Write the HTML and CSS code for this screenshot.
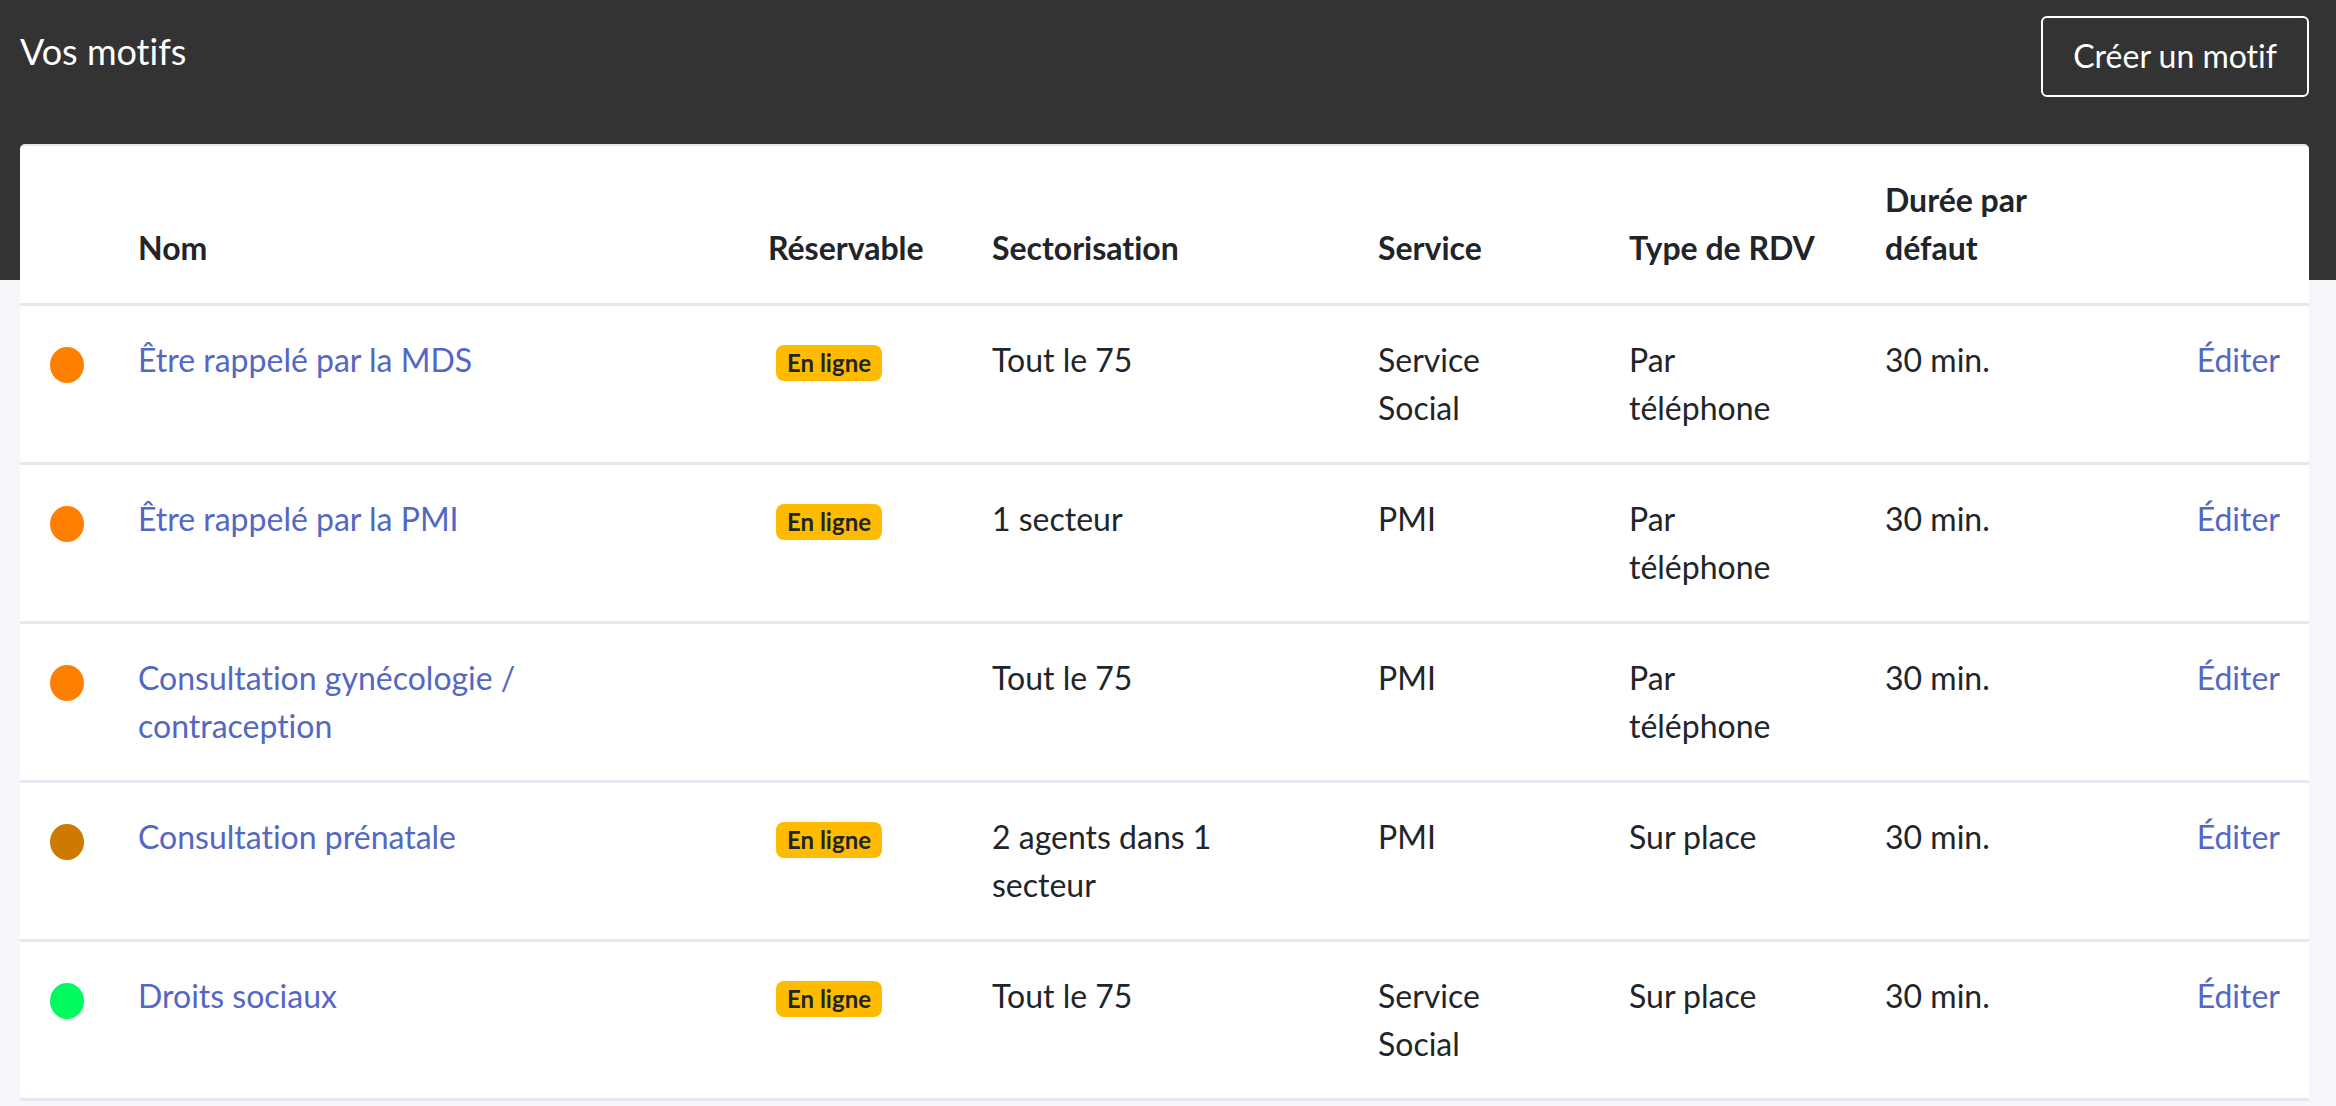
FILE: index.html
```html
<!DOCTYPE html>
<html lang="fr">
<head>
<meta charset="utf-8">
<title>Vos motifs</title>
<link rel="stylesheet" href="styles.css">
</head>
<body>
<div class="page">
  <header class="topbar">
    <h1 class="title">Vos motifs</h1>
    <a class="btn-outline" href="#">Créer un motif</a>
  </header>
  <section class="card">
    <table class="motifs">
      <colgroup>
        <col class="c-dot"><col class="c-nom"><col class="c-res"><col class="c-sect"><col class="c-serv"><col class="c-type"><col class="c-dur"><col class="c-edit">
      </colgroup>
      <thead>
        <tr>
          <th class="dot-cell"></th>
          <th class="nom">Nom</th>
          <th class="res nowrap">Réservable</th>
          <th class="sect nowrap">Sectorisation</th>
          <th class="serv">Service</th>
          <th class="type nowrap">Type de RDV</th>
          <th class="dur">Durée par défaut</th>
          <th class="edit"></th>
        </tr>
      </thead>
      <tbody>
        <tr>
          <td class="dot-cell"><span class="dot dot-orange"></span></td>
          <td class="nom"><a href="#">Être rappelé par la MDS</a></td>
          <td class="res"><span class="badge">En ligne</span></td>
          <td class="sect">Tout le 75</td>
          <td class="serv">Service Social</td>
          <td class="type">Par téléphone</td>
          <td class="dur">30 min.</td>
          <td class="edit"><a href="#">Éditer</a></td>
        </tr>
        <tr>
          <td class="dot-cell"><span class="dot dot-orange"></span></td>
          <td class="nom"><a href="#">Être rappelé par la PMI</a></td>
          <td class="res"><span class="badge">En ligne</span></td>
          <td class="sect">1 secteur</td>
          <td class="serv">PMI</td>
          <td class="type">Par téléphone</td>
          <td class="dur">30 min.</td>
          <td class="edit"><a href="#">Éditer</a></td>
        </tr>
        <tr>
          <td class="dot-cell"><span class="dot dot-orange"></span></td>
          <td class="nom"><a href="#">Consultation gynécologie / contraception</a></td>
          <td class="res"></td>
          <td class="sect">Tout le 75</td>
          <td class="serv">PMI</td>
          <td class="type">Par téléphone</td>
          <td class="dur">30 min.</td>
          <td class="edit"><a href="#">Éditer</a></td>
        </tr>
        <tr>
          <td class="dot-cell"><span class="dot dot-brown"></span></td>
          <td class="nom"><a href="#">Consultation prénatale</a></td>
          <td class="res"><span class="badge">En ligne</span></td>
          <td class="sect">2 agents dans 1 secteur</td>
          <td class="serv">PMI</td>
          <td class="type">Sur place</td>
          <td class="dur">30 min.</td>
          <td class="edit"><a href="#">Éditer</a></td>
        </tr>
        <tr>
          <td class="dot-cell"><span class="dot dot-green"></span></td>
          <td class="nom"><a href="#">Droits sociaux</a></td>
          <td class="res"><span class="badge">En ligne</span></td>
          <td class="sect">Tout le 75</td>
          <td class="serv">Service Social</td>
          <td class="type">Sur place</td>
          <td class="dur">30 min.</td>
          <td class="edit"><a href="#">Éditer</a></td>
        </tr>
      </tbody>
    </table>
  </section>
</div>
</body>
</html>
```

FILE: styles.css
```css
html, body {
  margin: 0;
  padding: 0;
}

body {
  font-family: Lato, "Open Sans", "Liberation Sans", sans-serif;
  font-size: 32px;
  line-height: 48px;
  color: #212529;
  background: #f5f6fa;
  font-variant-ligatures: no-common-ligatures;
  font-feature-settings: "liga" 0, "dlig" 0;
}

.page {
  min-height: 1106px;
  padding: 0 27px 0 20px;
  background: linear-gradient(to bottom, #333333 0, #333333 280px, #f5f6fa 280px);
}

.topbar {
  display: flex;
  justify-content: space-between;
  align-items: flex-start;
  padding-top: 16px;
}

.title {
  margin: 11px 0 0 0;
  font-size: 36px;
  line-height: 48px;
  font-weight: 400;
  color: #ffffff;
}

.btn-outline {
  display: inline-block;
  padding: 14px 30px 15px 30px;
  border: 2px solid #ffffff;
  border-radius: 6px;
  color: #ffffff;
  text-decoration: none;
  font-size: 32px;
  line-height: 48px;
}

.card {
  margin-top: 47px;
  background: #ffffff;
  border-top: 2px solid #e3e8ee;
  border-radius: 5px 5px 0 0;
}

.motifs {
  width: 100%;
  border-collapse: collapse;
  table-layout: fixed;
}

.c-dot { width: 118px; }
.c-nom { width: 630px; }
.c-res { width: 224px; }
.c-sect { width: 386px; }
.c-serv { width: 251px; }
.c-type { width: 256px; }
.c-dur { width: 265px; }
.c-edit { width: 159px; }

.motifs th,
.motifs td {
  padding: 30px 0;
  text-align: left;
  vertical-align: top;
}

.motifs th {
  font-weight: 700;
  vertical-align: bottom;
  padding-bottom: 31px;
  border-bottom: 3px solid #e3e8ee;
}

.motifs td {
  border-bottom: 3px solid #e3e8ee;
}

.motifs .dot-cell { padding-left: 30px; }
.motifs .nom { padding-right: 160px; }
.motifs .sect { padding-right: 126px; }
.motifs .serv { padding-right: 101px; }
.motifs .type { padding-right: 91px; }
.motifs .dur { padding-right: 75px; }
.motifs .edit { text-align: right; padding-right: 29px; }

.nowrap { white-space: nowrap; }

.motifs a {
  color: #5367c3;
  text-decoration: none;
}

.dot {
  display: block;
  width: 34px;
  height: 36px;
  margin-top: 11px;
  border-radius: 50%;
}

.dot-orange { background: #ff7f00; }
.dot-brown { background: #cc7a00; }
.dot-green { background: #00fa5f; }

.badge {
  display: inline-block;
  margin-left: 8px;
  padding: 6px 11px;
  border-radius: 8px;
  background: #ffbb00;
  color: #212529;
  font-size: 24px;
  line-height: 24px;
  font-weight: 700;
}
```
